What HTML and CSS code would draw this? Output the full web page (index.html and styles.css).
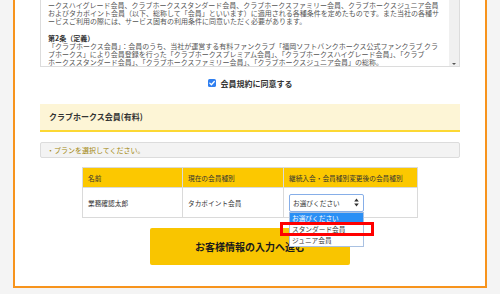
FILE: index.html
```html
<!DOCTYPE html>
<html>

<head>
    <title>クラブホークス会員 入会</title>
    <link rel="stylesheet" href="styles.css">
</head>

<body>
    <div class="site">
        <div class="frame">
            <div class="terms">
                <div class="terms-text">
                    <p>ークスハイグレード会員、クラブホークススタンダード会員、クラブホークスファミリー会員、クラブホークスジュニア会員<br>およびタカポイント会員（以下、総称して「会員」といいます）に適用される各種条件を定めたものです。また当社の各種サ<br>ービスご利用の際には、サービス固有の利用条件に同意いただく必要があります。</p>
                    <p class="article">第2条（定義）</p>
                    <p>「クラブホークス会員」：会員のうち、当社が運営する有料ファンクラブ「福岡ソフトバンクホークス公式ファンクラブ クラ<br>ブホークス」により会員登録を行った「クラブホークスプレミアム会員」、「クラブホークスハイグレード会員」、「クラブ<br>ホークススタンダード会員」、「クラブホークスファミリー会員」、「クラブホークスジュニア会員」の総称。</p>
                </div>
                <div class="scrollbar"><span class="scroll-arrow"></span></div>
            </div>

            <label class="agree">
                <span class="check">
                    <svg width="8" height="8" viewBox="0 0 8 8"><rect width="8" height="8" rx="1.6" fill="#2f7ff0"/><path d="M1.8 4.1 L3.4 5.7 L6.3 2.5" fill="none" stroke="#fff" stroke-width="1.3" stroke-linecap="round" stroke-linejoin="round"/></svg>
                </span>
                会員規約に同意する
            </label>

            <h2 class="plan-title">クラブホークス会員(有料)</h2>
            <p class="notice">・プランを選択してください。</p>

            <table class="plan-table">
                <colgroup>
                    <col class="col-name">
                    <col class="col-current">
                    <col class="col-next">
                </colgroup>
                <tr>
                    <th>名前</th>
                    <th>現在の会員種別</th>
                    <th>継続入会・会員種別変更後の会員種別</th>
                </tr>
                <tr>
                    <td>業務確認太郎</td>
                    <td>タカポイント会員</td>
                    <td>
                        <div class="select-wrap">
                            <div class="select">
                                <span>お選びください</span>
                                <svg width="5" height="9" viewBox="0 0 5 9"><path d="M2.5 0.5 L4.8 3.6 L0.2 3.6 Z M2.5 8.5 L4.8 5.4 L0.2 5.4 Z" fill="#333"/></svg>
                            </div>
                            <ul class="options">
                                <li class="selected">お選びください</li>
                                <li>スタンダード会員</li>
                                <li>ジュニア会員</li>
                            </ul>
                            <div class="highlight"></div>
                        </div>
                    </td>
                </tr>
            </table>

            <div class="actions">
                <button class="btn">お客様情報の入力へ進む</button>
            </div>
        </div>
    </div>
</body>

</html>
```

FILE: styles.css
```css
body {
    margin: 0;
    background-color: #f4f4f4;
    font-family: "Noto Sans CJK JP", "Noto Sans", sans-serif;
    color: #333;
}

.site {
    padding: 0 13px 7px;
}

.frame {
    background-color: #fff;
    border: 2px solid #f7941d;
    border-top: 0;
    padding: 0 25px 21px;
}

/* terms box, scrolled part way down */
.terms {
    display: flex;
    height: 67px;
    box-sizing: border-box;
    border: 1px solid #dcdcdc;
    border-top: 0;
}
.terms-text {
    flex: 1;
    overflow: hidden;
    padding: 1px 0 0 7px;
    font-size: 7px;
    line-height: 8.2px;
    color: #555;
    white-space: nowrap;
}
.terms-text p {
    margin: 0 0 8.2px;
}
.terms-text .article {
    margin: 0;
    font-weight: bold;
    color: #333;
}
.scrollbar {
    width: 10px;
    background-color: #f0f0f0;
    display: flex;
    align-items: flex-end;
    justify-content: center;
}
.scroll-arrow {
    width: 0;
    height: 0;
    border-left: 2px solid transparent;
    border-right: 2px solid transparent;
    border-top: 2px solid #555;
    margin-bottom: 1px;
}

.agree {
    display: flex;
    justify-content: center;
    align-items: center;
    gap: 5px;
    height: 14px;
    margin-top: 9px;
    font-size: 8px;
    font-weight: bold;
}
.check {
    display: flex;
}

.plan-title {
    margin: 14px 0 0;
    height: 28px;
    box-sizing: border-box;
    background-color: #fdf5d6;
    border-bottom: 2px solid #fcd834;
    padding-left: 9px;
    font-size: 8px;
    line-height: 26px;
}

.notice {
    margin: 10px 0 0;
    height: 16px;
    box-sizing: border-box;
    border: 1px solid #dcdcdc;
    border-radius: 2px;
    background-color: #f3f3f3;
    padding-left: 6px;
    font-size: 7px;
    line-height: 14px;
    color: #a3880f;
}

.plan-table {
    margin: 9px auto 0;
    border-collapse: collapse;
    table-layout: fixed;
    width: 335px;
    font-size: 6.7px;
}
.col-name { width: 100px; }
.col-current { width: 101px; }
.col-next { width: 134px; }
.plan-table th,
.plan-table td {
    border: 1px solid #dadada;
    text-align: left;
    font-weight: normal;
    padding: 0 5px;
}
.plan-table th {
    background-color: #fcc800;
    height: 19px;
}
.plan-table td {
    height: 29px;
}

.select-wrap {
    position: relative;
    width: 75px;
}
.select {
    height: 18px;
    box-sizing: border-box;
    border: 1px solid #86aee8;
    border-radius: 2px;
    display: flex;
    align-items: center;
    justify-content: space-between;
    padding: 0 4px 0 3px;
    background-color: #fff;
}
.options {
    position: absolute;
    top: 18px;
    left: 0;
    width: 75px;
    box-sizing: border-box;
    margin: 0;
    padding: 0;
    list-style: none;
    border: 1px solid #a9c1e2;
    background-color: #fff;
    z-index: 2;
}
.options li {
    height: 11px;
    line-height: 11px;
    padding-left: 2px;
}
.options .selected {
    background-color: #2a8ff5;
    color: #fff;
}
.highlight {
    position: absolute;
    left: -9px;
    top: 28px;
    width: 94px;
    height: 14px;
    box-sizing: border-box;
    border: 3px solid #f00;
    z-index: 3;
}

.actions {
    display: flex;
    justify-content: center;
    margin-top: 10px;
}
.btn {
    width: 200px;
    height: 37px;
    border: 0;
    border-radius: 2px;
    background-color: #f9c500;
    font-family: inherit;
    font-size: 10px;
    font-weight: bold;
    color: #1b1b1b;
}
```
